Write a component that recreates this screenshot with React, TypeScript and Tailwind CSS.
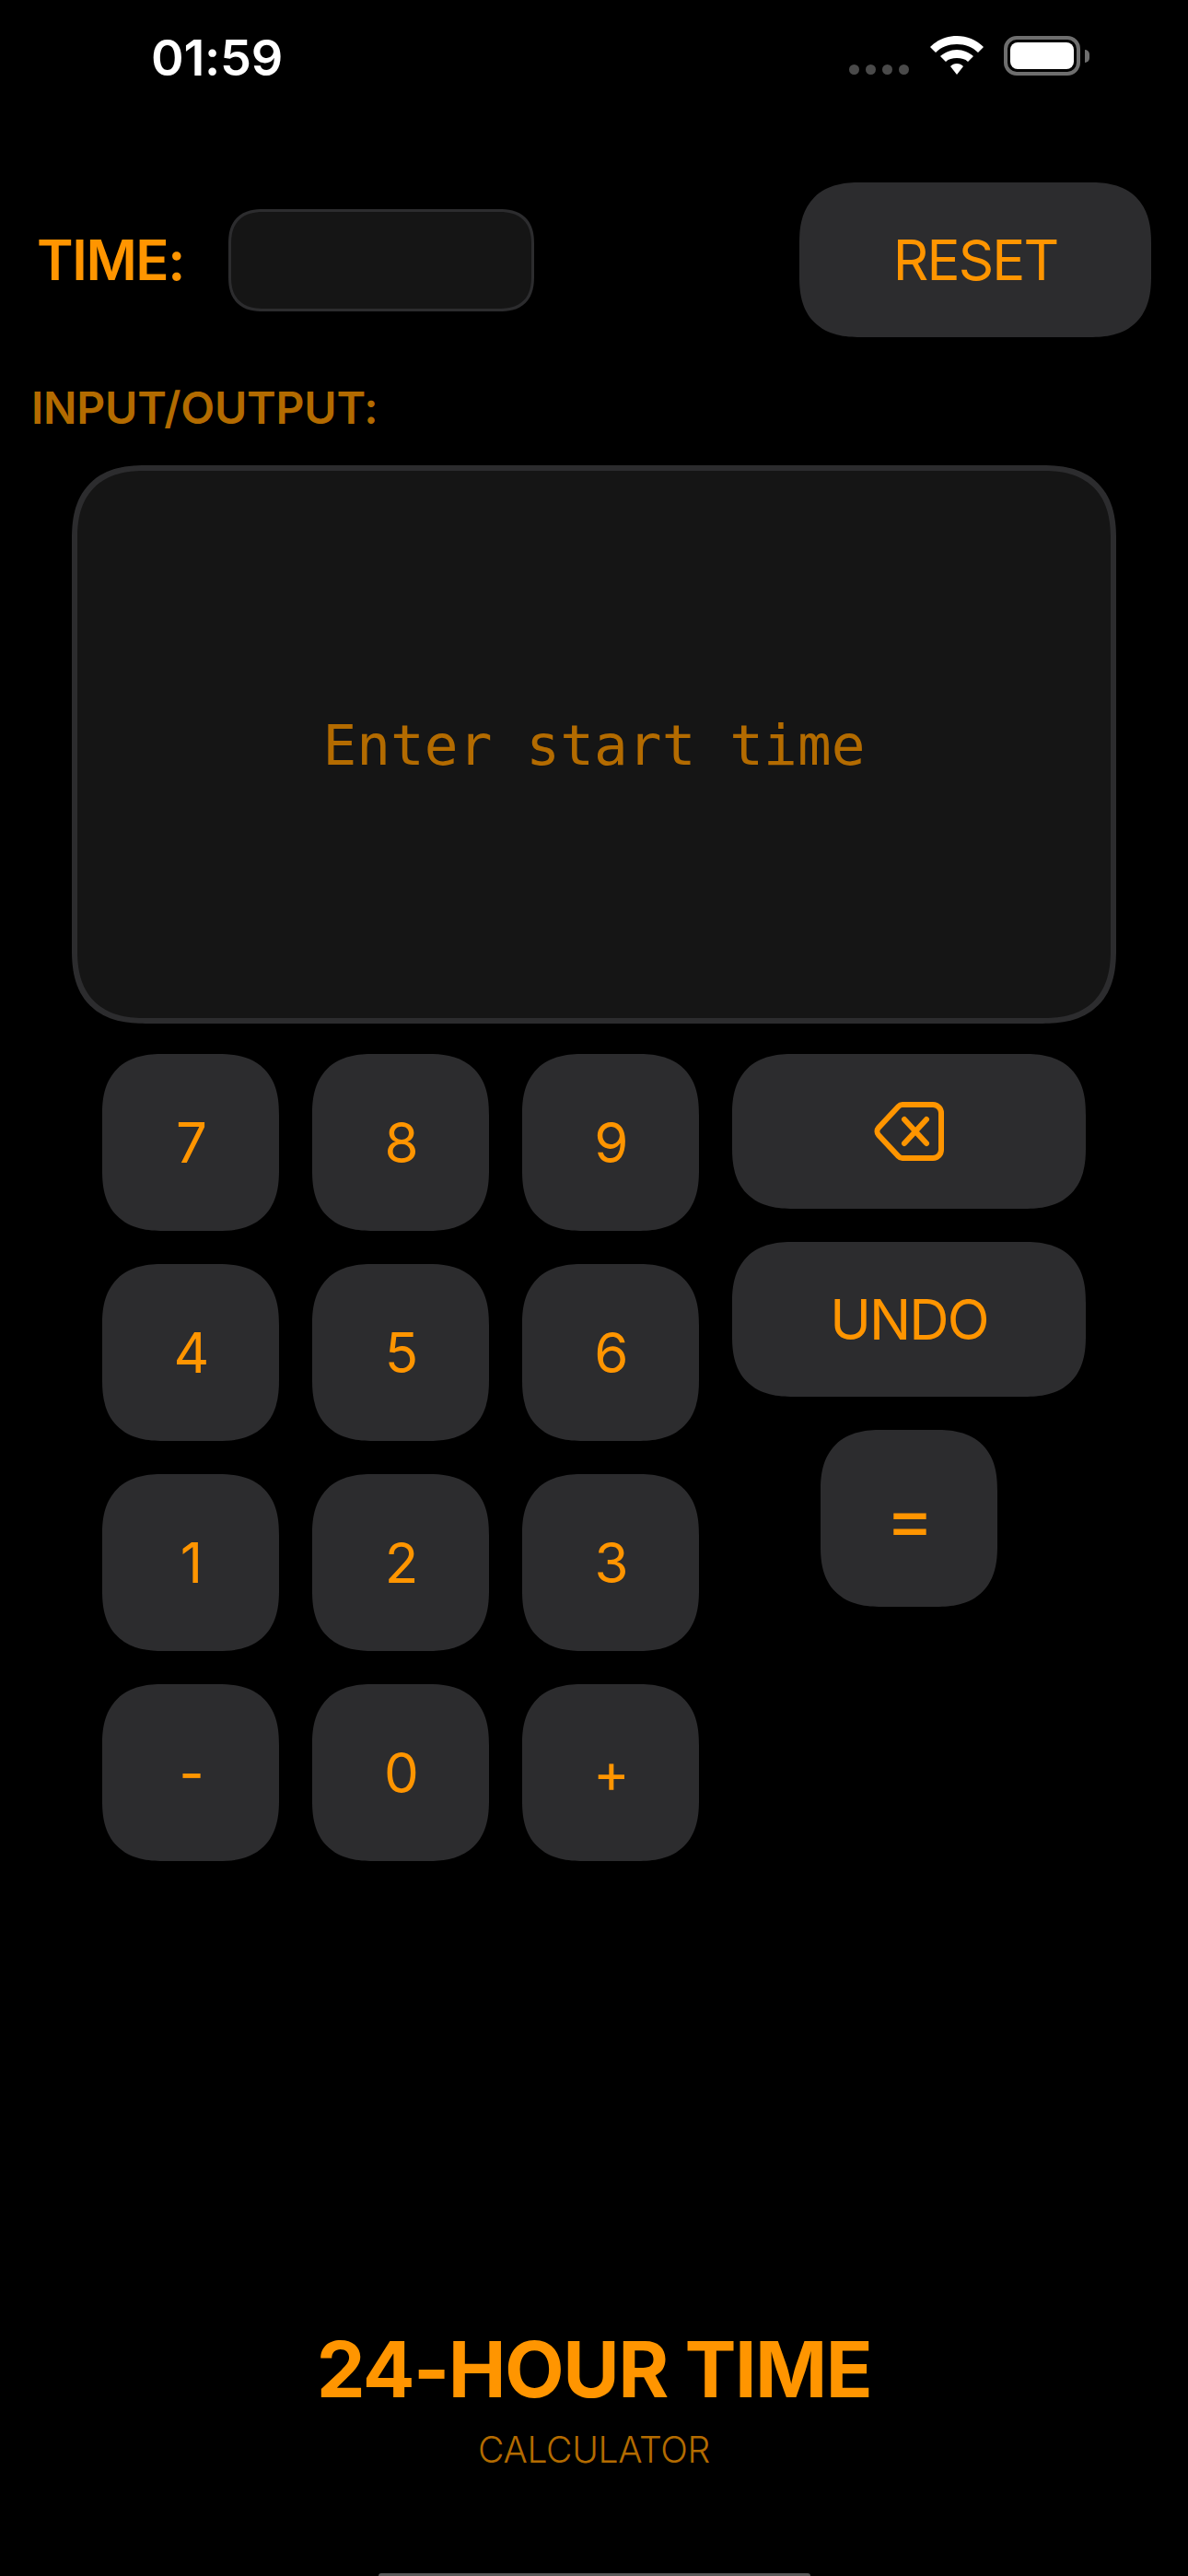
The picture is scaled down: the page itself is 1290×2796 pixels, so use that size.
const ORANGE = 'text-[#ff9500]';

const Key = ({ label, className = 'w-[192px] h-[192px]' }: { label: string; className?: string }) => (
  <div className={`${className} flex items-center justify-center rounded-[66px] [corner-shape:superellipse(1.3)] bg-[#2c2c2e] text-[60px] font-[380] tracking-[-1.9px] ${ORANGE}`}>
    {label}
  </div>
);

const rows = [
  ['7', '8', '9'],
  ['4', '5', '6'],
  ['1', '2', '3'],
  ['-', '0', '+'],
];

const StatusBar = () => (
  <div className="flex h-[198px] items-start justify-between pl-[164px] pr-[107px] pt-[31px]">
    <span className="text-[54px] leading-[64px] font-semibold tracking-[-0.2px] text-white">01:59</span>
    <div className="-mt-[2px] flex items-start pt-[10px]">
      <div className="mt-[31px] mr-[23px] flex gap-[7px]">
        <span className="h-[11px] w-[11px] rounded-full bg-[#4a4a4a]" />
        <span className="h-[11px] w-[11px] rounded-full bg-[#4a4a4a]" />
        <span className="h-[11px] w-[11px] rounded-full bg-[#4a4a4a]" />
        <span className="h-[11px] w-[11px] rounded-full bg-[#4a4a4a]" />
      </div>
      <svg width="58" height="43" viewBox="0 0 58 43" className="mr-[22px]">
        <path d="M29 0C40 0 50 4 58 12L52 18C46 12 38 9 29 9C20 9 12 12 6 18L0 12C8 4 18 0 29 0Z" fill="#fff" />
        <path d="M29 15C36 15 42 18 47 22L41 28C38 25 34 24 29 24C24 24 20 25 17 28L11 22C16 18 22 15 29 15Z" fill="#fff" />
        <path d="M29 30C32 30 34 31 36 33L29 42L22 33C24 31 26 30 29 30Z" fill="#fff" />
      </svg>
      <div className="flex items-center">
        <div className="h-[43px] w-[83px] rounded-[14px] border-[4px] border-[#6e6e6e] p-[3px]">
          <div className="h-full w-full rounded-[8px] bg-white" />
        </div>
        <div className="ml-[5px] h-[14px] w-[5px] rounded-r-full bg-[#6e6e6e]" />
      </div>
    </div>
  </div>
);

const BackspaceIcon = () => (
  <svg width="76" height="64" viewBox="0 0 76 64" fill="none" stroke="#ff9500" strokeWidth="6" strokeLinecap="round" strokeLinejoin="round">
    <path d="M31 3H64a9 9 0 0 1 9 9V52a9 9 0 0 1-9 9H31a6 6 0 0 1-4.5-2L5 36a6 6 0 0 1 0-8L26.5 5A6 6 0 0 1 31 3Z" />
    <path d="M33 19L57 45M57 19L33 45" />
  </svg>
);

export default function App() {
  return (
    <div className="relative flex h-[2796px] w-[1290px] flex-col overflow-hidden bg-black font-['Inter',sans-serif]">
      <StatusBar />

      <div className="flex h-[168px] items-center justify-between pl-[40px] pr-[40px]">
        <div className="flex items-center gap-[48px]">
          <span className={`text-[60px] font-semibold tracking-[-1.4px] ${ORANGE}`}>TIME:</span>
          <div className="h-[111px] w-[332px] rounded-[38px] [corner-shape:superellipse(1.3)] border-[3px] border-[#2c2c2e] bg-[#151515]" />
        </div>
        <Key label="RESET" className="h-[168px] w-[382px]" />
      </div>

      <div className="mt-[49px] pl-[34px] text-[48px] leading-[56px] font-semibold tracking-[-0.2px] text-[#b36b00]">INPUT/OUTPUT:</div>

      <div className="mx-[78px] mt-[34px] flex h-[606px] items-center justify-center rounded-[80px] [corner-shape:superellipse(1.3)] border-[6px] border-[#2c2c2e] bg-[#151515] pt-[2px] font-['DejaVu_Sans_Mono',monospace] text-[61px] tracking-[0.1px] text-[#b36b00]">
        Enter start time
      </div>

      <div className="mt-[33px] flex items-start gap-[36px] pl-[111px]">
        <div className="flex flex-col gap-[36px]">
          {rows.map((row) => (
            <div key={row.join('')} className="flex gap-[36px]">
              {row.map((k) => (
                <Key key={k} label={k} />
              ))}
            </div>
          ))}
        </div>
        <div className="flex w-[384px] flex-col items-center gap-[36px]">
          <div className="flex h-[168px] w-[384px] items-center justify-center rounded-[66px] [corner-shape:superellipse(1.3)] bg-[#2c2c2e]">
            <BackspaceIcon />
          </div>
          <Key label="UNDO" className="h-[168px] w-[384px]" />
          <Key label="=" className="h-[192px] w-[192px] !text-[80px]" />
        </div>
      </div>

      <div className="mt-auto flex flex-col items-center pb-[113px]">
        <div className={`text-[84px] leading-[96px] font-bold tracking-[-1.5px] ${ORANGE}`}>24-HOUR TIME</div>
        <div className="mt-[15px] text-[39px] leading-[48px] font-light tracking-[-0.3px] text-[#b36b00]">CALCULATOR</div>
      </div>

      <div className="absolute bottom-0 left-[411px] h-[3px] w-[469px] rounded-t-full bg-[#5a5a5a]" />
    </div>
  );
}
